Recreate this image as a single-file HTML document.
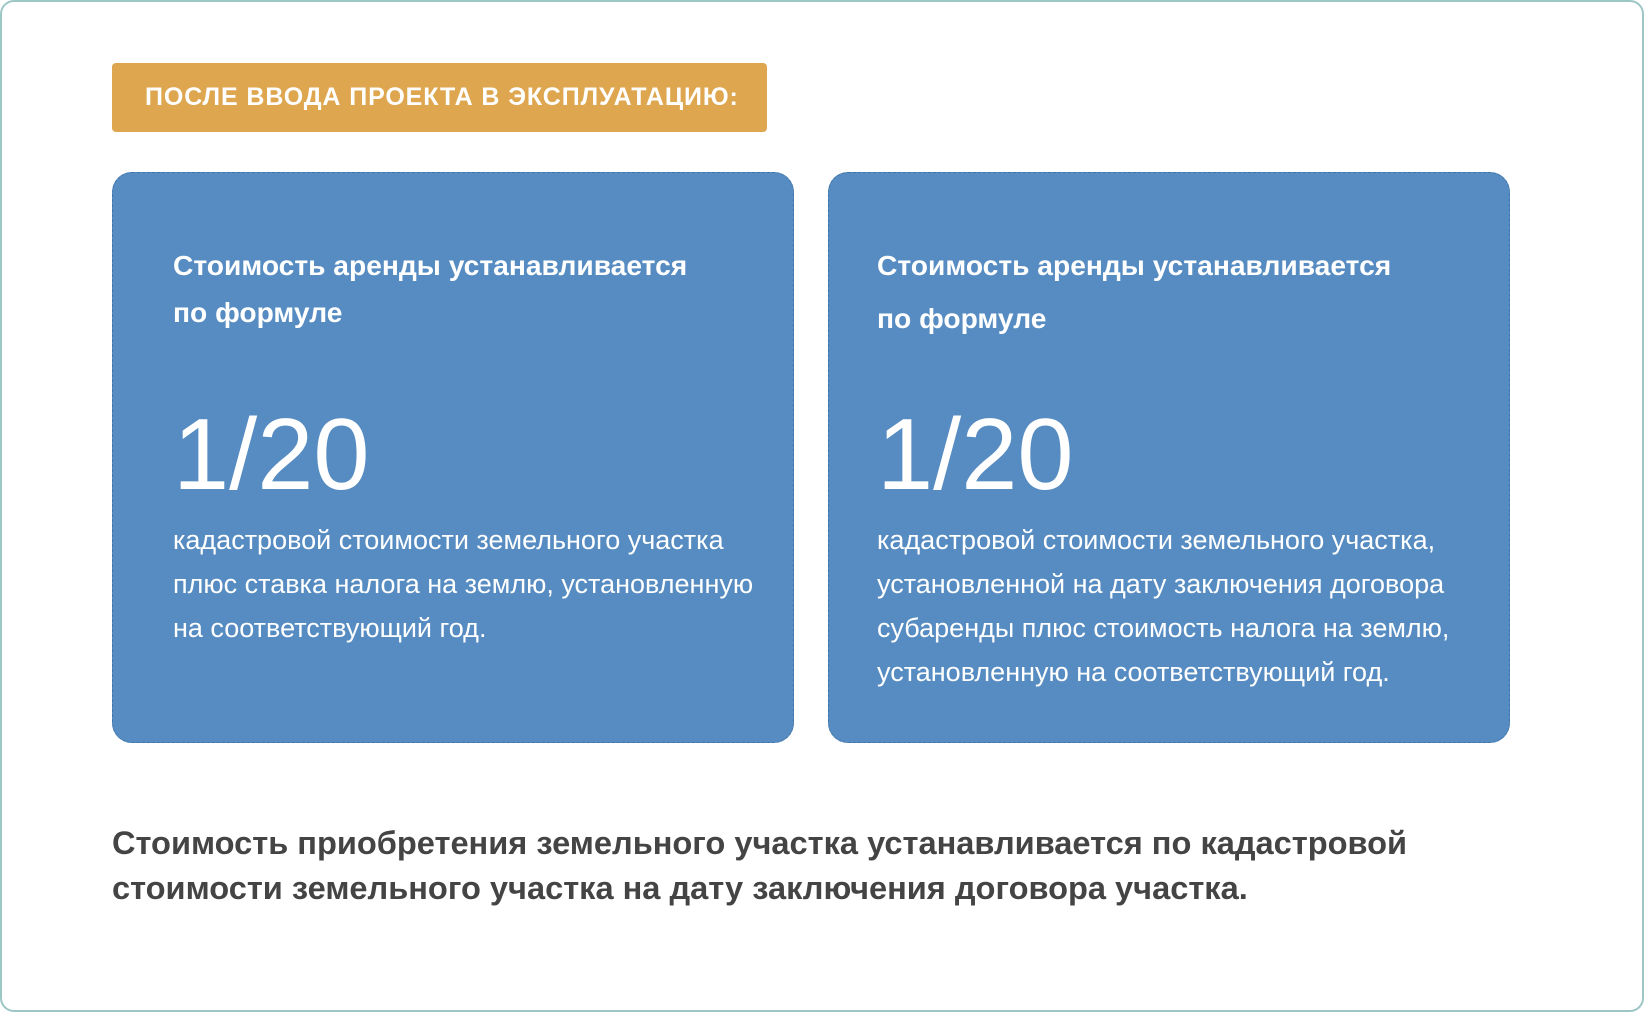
<!DOCTYPE html>
<html><head><meta charset="utf-8"><style>
html,body{margin:0;padding:0;background:#fff}
body{width:1644px;height:1012px;position:relative;overflow:hidden;font-family:"Liberation Sans","DejaVu Sans",sans-serif}
.frame{position:absolute;left:0;top:0;width:1640px;height:1008px;border:2px solid #9dc7c5;border-radius:14px}
.badge{position:absolute;left:112px;top:63px;width:655px;height:69px;background:#dea64e;border-radius:4px;color:#fff;font-weight:bold;font-size:25px;line-height:69px;padding-left:33px;box-sizing:border-box;letter-spacing:0.9px;white-space:nowrap}
.card{position:absolute;top:172px;width:682px;height:571px;background:#568cc1;border:1px dashed #3f74a8;border-radius:20px;box-sizing:border-box;color:#fff}
.t{position:absolute;font-size:28.2px;font-weight:bold;white-space:nowrap}
.n{position:absolute;top:222px;font-size:101px;line-height:120px}
.b{position:absolute;top:345px;font-size:27px;line-height:44px;white-space:nowrap}
.c1 .t,.c1 .n,.c1 .b{left:60px}
.c2 .t,.c2 .n,.c2 .b{left:48px}
.p{position:absolute;left:112px;top:820px;font-size:32.6px;line-height:45px;font-weight:bold;color:#444;white-space:nowrap}
</style></head><body>
<div class="frame"></div>
<div class="badge">ПОСЛЕ ВВОДА ПРОЕКТА В ЭКСПЛУАТАЦИЮ:</div>
<div class="card c1" style="left:112px">
<div class="t" style="top:76px">Стоимость аренды устанавливается</div>
<div class="t" style="top:123px">по формуле</div>
<div class="n">1/20</div>
<div class="b">кадастровой стоимости земельного участка<br>плюс ставка налога на землю, установленную<br>на соответствующий год.</div>
</div>
<div class="card c2" style="left:828px">
<div class="t" style="top:76px">Стоимость аренды устанавливается</div>
<div class="t" style="top:129px">по формуле</div>
<div class="n">1/20</div>
<div class="b">кадастровой стоимости земельного участка,<br>установленной на дату заключения договора<br>субаренды плюс стоимость налога на землю,<br>установленную на соответствующий год.</div>
</div>
<div class="p">Стоимость приобретения земельного участка устанавливается по кадастровой<br>стоимости земельного участка на дату заключения договора участка.</div>
</body></html>
